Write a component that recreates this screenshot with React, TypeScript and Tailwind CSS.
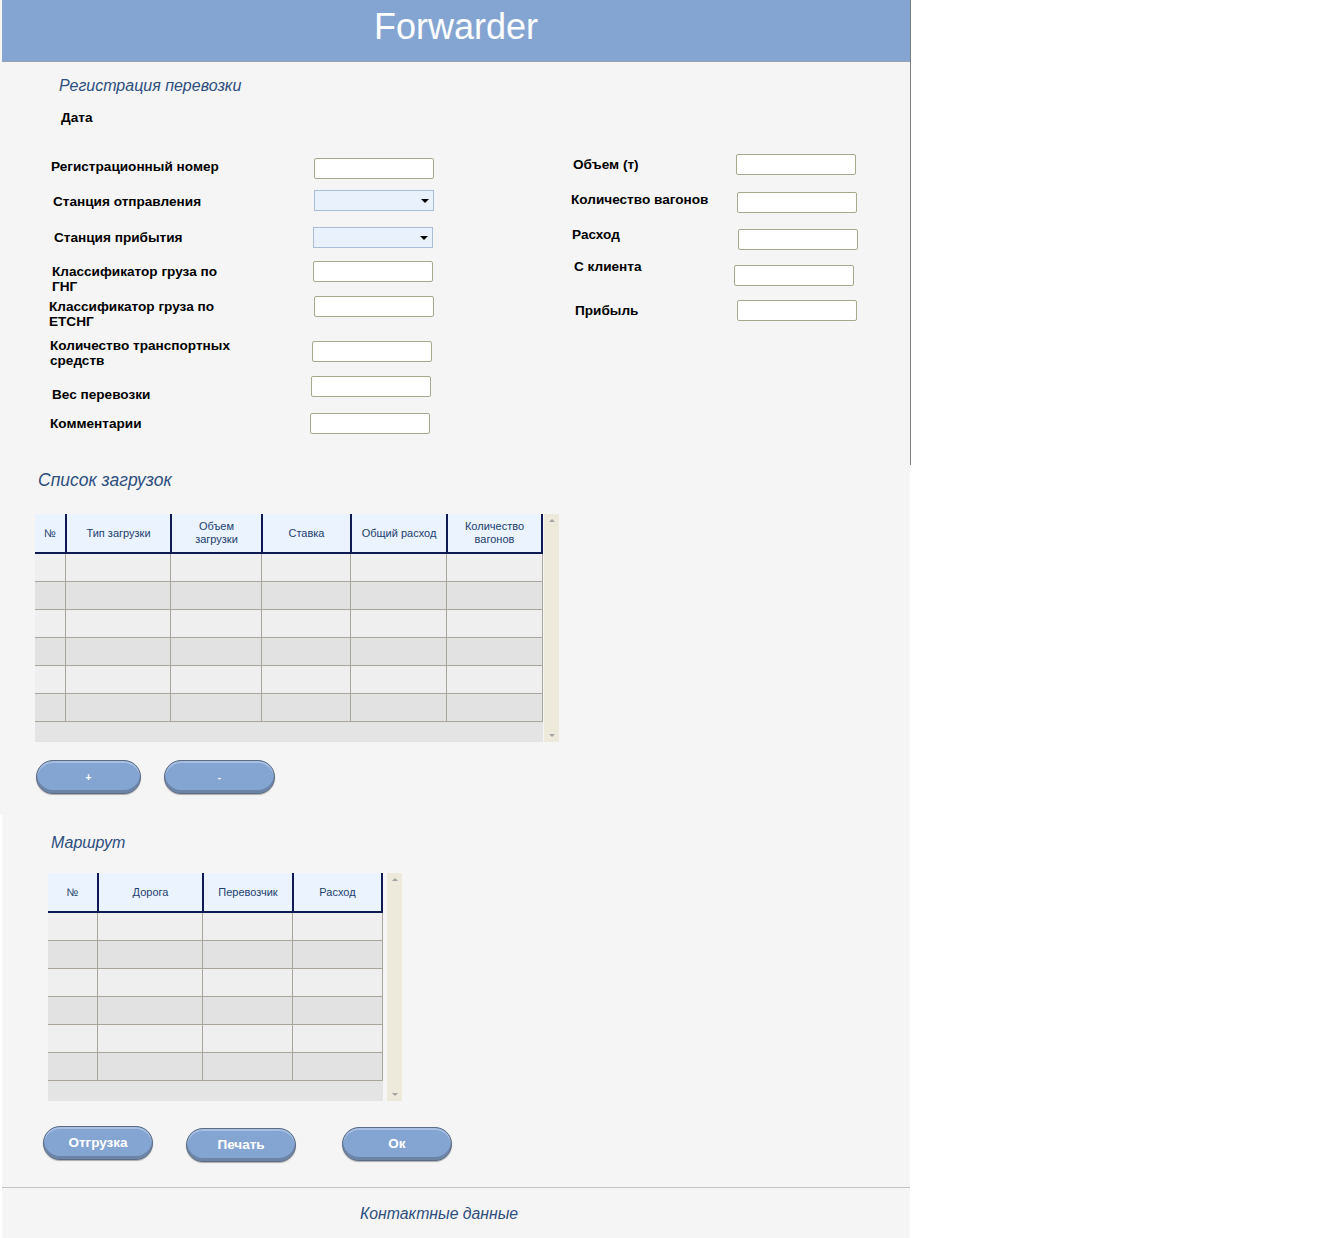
import clsx from "clsx";

type Row = {
  label: string[];
  h: string;
  box: string;
  lt: string;
  it: string;
  select?: boolean;
};

// left column, label box width = input x position
const leftRows: Row[] = [
  { label: ["Регистрационный номер"], h: "h-[32px]", box: "w-[314px] pl-[51px]", lt: "pt-[1px]", it: "pt-[0px]" },
  { label: ["Станция отправления"], h: "h-[37px]", box: "w-[314px] pl-[53px]", lt: "pt-[4px]", it: "pt-[0px]", select: true },
  { label: ["Станция прибытия"], h: "h-[34px]", box: "w-[313px] pl-[54px]", lt: "pt-[3px]", it: "pt-[0px]", select: true },
  { label: ["Классификатор груза по", "ГНГ"], h: "h-[35px]", box: "w-[313px] pl-[52px]", lt: "pt-[3px]", it: "pt-[0px]" },
  { label: ["Классификатор груза по", "ЕТСНГ"], h: "h-[41px]", box: "w-[314px] pl-[49px]", lt: "pt-[3px]", it: "pt-[0px]" },
  { label: ["Количество транспортных", "средств"], h: "h-[39px]", box: "w-[312px] pl-[50px]", lt: "pt-[1px]", it: "pt-[4px]" },
  { label: ["Вес перевозки"], h: "h-[37px]", box: "w-[311px] pl-[52px]", lt: "pt-[11px]", it: "pt-[0px]" },
  { label: ["Комментарии"], h: "h-[21px]", box: "w-[310px] pl-[50px]", lt: "pt-[3px]", it: "pt-[0px]" },
];

// right column starts at x=560
const rightRows: Row[] = [
  { label: ["Объем (т)"], h: "h-[37px]", box: "w-[176px] pl-[13px]", lt: "pt-[3px]", it: "pt-[0px]" },
  { label: ["Количество вагонов"], h: "h-[35px]", box: "w-[177px] pl-[11px]", lt: "pt-[1px]", it: "pt-[1px]" },
  { label: ["Расход"], h: "h-[32px]", box: "w-[178px] pl-[12px]", lt: "pt-[1px]", it: "pt-[3px]" },
  { label: ["С клиента"], h: "h-[42px]", box: "w-[174px] pl-[14px]", lt: "pt-[1px]", it: "pt-[7px]" },
  { label: ["Прибыль"], h: "h-[21px]", box: "w-[177px] pl-[15px]", lt: "pt-[3px]", it: "pt-[0px]" },
];

function Field({ select }: { select?: boolean }) {
  if (select) {
    return (
      <div className="flex h-[21px] w-[120px] items-center justify-end border border-[#a9bdd9] bg-[#e9f1fd] pr-[4px]">
        <div className="h-0 w-0 border-x-[4px] border-t-[4px] border-x-transparent border-t-black" />
      </div>
    );
  }
  return <input className="block h-[21px] w-[120px] rounded-[2px] border border-[#a5aa8c] bg-white outline-none" />;
}

function FormRow({ row }: { row: Row }) {
  return (
    <div className={clsx("flex", row.h)}>
      <div className={clsx("shrink-0 text-[13.6px] font-bold leading-[15px] text-black", row.box, row.lt)}>
        {row.label.map((l) => (
          <div key={l}>{l}</div>
        ))}
      </div>
      <div className={row.it}>
        <Field select={row.select} />
      </div>
    </div>
  );
}

function Arrow({ up }: { up?: boolean }) {
  return (
    <div
      className={clsx(
        "h-0 w-0 border-x-[3px] border-x-transparent",
        up ? "border-b-[3px] border-b-[#a3a3a3]" : "border-t-[3px] border-t-[#a3a3a3]"
      )}
    />
  );
}

function Grid({ cols, headers, gap }: { cols: string[]; headers: string[][]; gap: string }) {
  const rows = [0, 1, 2, 3, 4, 5];
  return (
    <div className="flex">
      <div className="bg-[#e4e4e4]">
        <div className="flex h-[40px] border-b-2 border-[#0f1a55] bg-[#ebf3fe]">
          {headers.map((h, i) => (
            <div
              key={i}
              className={clsx(
                "flex flex-col items-center justify-center text-[11px] leading-[13px] text-[#22406e]",
                cols[i],
                i > 0 && "border-l-2 border-[#0f1a55]",
                i === headers.length - 1 && "border-r-2 border-[#0f1a55]"
              )}
            >
              {h.map((t) => (
                <span key={t}>{t}</span>
              ))}
            </div>
          ))}
        </div>
        {rows.map((r) => (
          <div key={r} className={clsx("flex h-[28px] border-b border-[#a9a59b]", r % 2 === 0 ? "bg-[#efefef]" : "bg-[#e2e2e2]")}>
            {cols.map((c, i) => (
              <div
                key={i}
                className={clsx(
                  c,
                  i > 0 && "border-l border-[#a9a59b]",
                  i === cols.length - 1 && "border-r border-[#a9a59b]"
                )}
              />
            ))}
          </div>
        ))}
        <div className="h-[20px]" />
      </div>
      <div className={clsx("flex w-[15px] flex-col items-center justify-between bg-[#edeadb] py-[5px]", gap)}>
        <Arrow up />
        <Arrow />
      </div>
    </div>
  );
}

function Pill({ label, className, small }: { label: string; className: string; small?: boolean }) {
  return (
    <button
      className={clsx(
        "h-[34px] rounded-full border border-[#5a6c84] bg-[#84a5d2] font-bold text-white shadow-[inset_0_-3px_0_#6c84a6,inset_0_2px_0_#a6bfe2,0_1px_1px_rgba(0,0,0,0.3)]",
        small ? "text-[10px]" : "text-[13.5px]",
        className
      )}
    >
      {label}
    </button>
  );
}

export default function App() {
  return (
    <div className="min-h-[1238px] w-[1342px] bg-white font-['Liberation_Sans',Arial,sans-serif]">
      {/* top block with right border */}
      <div className="h-[465px] w-[911px] border-r border-[#7d7d7d] bg-[#f5f5f5]">
        <div className="ml-[2px] h-[62px] border-b border-[#9aa3ad] bg-[#84a5d2] pt-[7px] text-center text-[36px] leading-[40px] text-white">
          Forwarder
        </div>
        <div className="pl-[59px] pt-[14px] text-[16px] italic leading-[20px] text-[#2d4e7e]">Регистрация перевозки</div>
        <div className="pl-[61px] pt-[14px] text-[13.6px] font-bold leading-[15px]">Дата</div>
        <div className="mt-[25px] flex">
          <div className="w-[560px] pt-[8px]">
            {leftRows.map((r) => (
              <FormRow key={r.label[0]} row={r} />
            ))}
          </div>
          <div className="pt-[4px]">
            {rightRows.map((r) => (
              <FormRow key={r.label[0]} row={r} />
            ))}
          </div>
        </div>
      </div>

      {/* loads list */}
      <div className="h-[350px] w-[910px] bg-[#f5f5f5] pt-[5px]">
        <div className="pl-[38px] text-[17.5px] italic leading-[20px] text-[#2d4e7e]">Список загрузок</div>
        <div className="ml-[35px] mt-[24px]">
          <Grid
            gap="ml-[1px]"
            cols={["w-[30px]", "w-[105px]", "w-[91px]", "w-[89px]", "w-[96px]", "w-[97px]"]}
            headers={[["№"], ["Тип загрузки"], ["Объем", "загрузки"], ["Ставка"], ["Общий расход"], ["Количество", "вагонов"]]}
          />
        </div>
        <div className="ml-[36px] mt-[18px] flex gap-[23px]">
          <Pill label="+" small className="w-[105px]" />
          <Pill label="-" small className="w-[111px]" />
        </div>
      </div>

      {/* route */}
      <div className="ml-[2px] w-[908px] bg-[#f5f5f5] pt-[18px]">
        <div className="pl-[49px] text-[16px] italic leading-[20px] text-[#2d4e7e]">Маршрут</div>
        <div className="ml-[46px] mt-[20px]">
          <Grid
            gap="ml-[4px]"
            cols={["w-[49px]", "w-[105px]", "w-[90px]", "w-[91px]"]}
            headers={[["№"], ["Дорога"], ["Перевозчик"], ["Расход"]]}
          />
        </div>
        <div className="mt-[25px] flex items-start pl-[41px]">
          <Pill label="Отгрузка" className="w-[110px]" />
          <Pill label="Печать" className="ml-[33px] mt-[2px] w-[110px]" />
          <Pill label="Ок" className="ml-[46px] mt-[1px] w-[110px]" />
        </div>
        <div className="mt-[25px] border-t border-[#c4c4c4] pb-[14px] pt-[16px]">
          <div className="pl-[358px] text-[15.8px] italic leading-[20px] text-[#2d4e7e]">Контактные данные</div>
        </div>
      </div>
    </div>
  );
}
